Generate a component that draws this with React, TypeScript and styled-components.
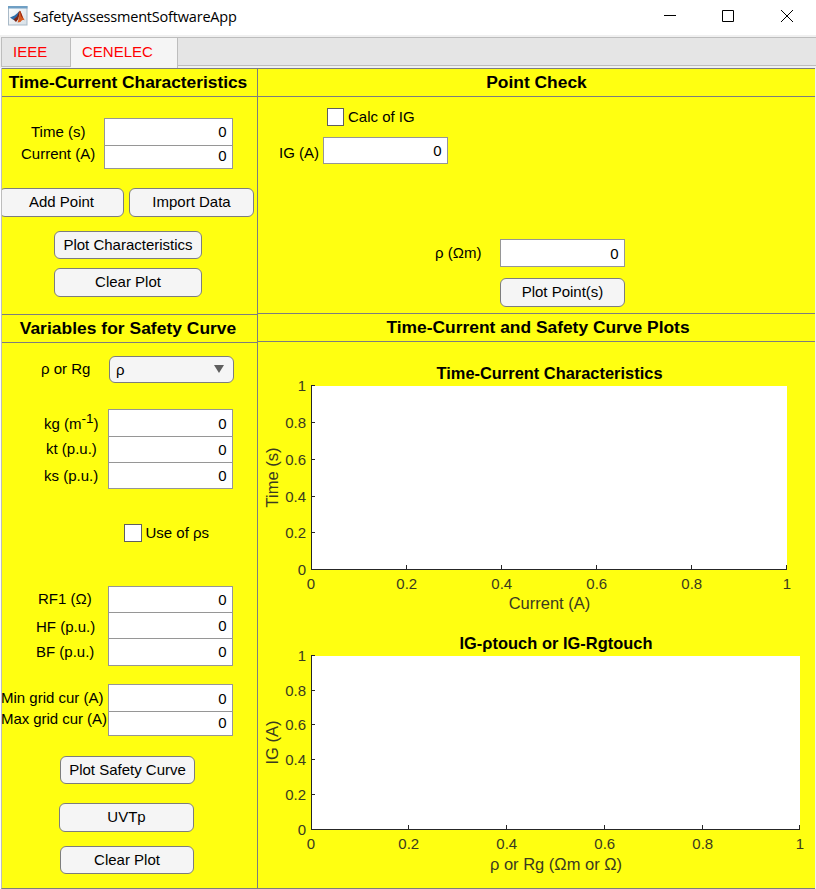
import React from "react";
import styled, { createGlobalStyle } from "styled-components";

const YELLOW = "#ffff11";
const LINE = "#7d7d7d";

const Global = createGlobalStyle`
  *, *::before, *::after { box-sizing: border-box; }
  html, body { margin: 0; padding: 0; background: #f0f0f0; overflow: hidden; }
  body, button, input { font-family: "Liberation Sans", Arial, sans-serif; font-size: 15px; color: #000; }
`;

const Window = styled.div`
  width: 816px;
  height: 889px;
  display: flex;
  flex-direction: column;
  background: #f0f0f0;
  overflow: hidden;
`;

const TitleBar = styled.header`
  height: 35px;
  flex: none;
  background: #fff;
  display: flex;
  align-items: flex-start;
  padding: 6px 23px 0 8px;
`;

const AppTitle = styled.span`
  margin: 0 auto 0 5px;
  padding-top: 1px;
  font: 14.5px/20px "Open Sans", "Noto Sans", sans-serif;
  letter-spacing: -0.2px;
  white-space: nowrap;
`;

const WindowButtons = styled.div`
  display: flex;
  gap: 46px;
  padding-top: 4px;
  svg { display: block; }
  svg:nth-child(-n + 2) { margin-left: -1px; margin-right: 1px; }
`;

const TabStrip = styled.nav`
  flex: none;
  height: 31px;
  margin-top: 2px;
  padding-left: 1px;
  display: flex;
  align-items: flex-start;
`;

const Tab = styled.div<{ $active?: boolean; $width: number }>`
  width: ${(p) => p.$width}px;
  height: ${(p) => (p.$active ? 31 : 30)}px;
  padding-left: 11px;
  border-top: 1px solid #bdbdbd;
  border-right: 1px solid #bdbdbd;
  border-bottom: ${(p) => (p.$active ? "none" : "1px solid #bdbdbd")};
  border-left: ${(p) => (p.$active ? "none" : "1px solid #bdbdbd")};
  background: ${(p) => (p.$active ? "#f5f5f5" : "#e5e5e5")};
  color: #f00;
  line-height: 28px;
`;

const TabFill = styled.div`
  flex: 1;
  height: 29px;
  background: #e5e5e5;
  border-top: 1px solid #bdbdbd;
  border-bottom: 1px solid #bdbdbd;
`;

const Board = styled.main`
  flex: 1;
  margin-right: 1px;
  border-left: 1px solid #fff;
  display: grid;
  grid-template-columns: 257px 557px;
`;

const Side = styled.div<{ $left?: boolean; $split: string }>`
  display: grid;
  grid-template-rows: ${(p) => p.$split};
  min-width: 0;
  background: ${YELLOW};
  border-bottom: 1px solid ${LINE};
  border-right: ${(p) => (p.$left ? `1px solid ${LINE}` : "none")};
  border-left: ${(p) => (p.$left ? "1px solid #bdbdbd" : "none")};
`;

const Panel = styled.section`
  min-width: 0;
  overflow: hidden;
  border-top: 1px solid ${LINE};
`;

const PanelTitle = styled.h2<{ $shift?: number; $spacing?: number }>`
  margin: 0;
  height: 28px;
  text-indent: ${(p) => p.$shift ?? 0}px;
  letter-spacing: ${(p) => p.$spacing ?? 0}px;
  border-bottom: 1px solid ${LINE};
  font-size: 17.4px;
  line-height: 26px;
  text-align: center;
  white-space: nowrap;
`;

const Row = styled.div<{ $top?: number; $left?: number; $gap?: number }>`
  display: flex;
  align-items: flex-start;
  gap: ${(p) => p.$gap ?? 0}px;
  margin-top: ${(p) => p.$top ?? 0}px;
  padding-left: ${(p) => p.$left ?? 0}px;
`;

const Labels = styled.div<{ $width: number }>`
  flex: none;
  width: ${(p) => p.$width}px;
`;

const Label = styled.label<{ $top: number; $left: number; $spacing?: number }>`
  display: block;
  width: max-content;
  height: 18px;
  margin: ${(p) => p.$top}px 0 0 ${(p) => p.$left}px;
  line-height: 18px;
  letter-spacing: ${(p) => p.$spacing ?? 0}px;
  white-space: nowrap;
  sup { font-size: 13.5px; line-height: 0; vertical-align: 6px; }
`;

const Fields = styled.div<{ $width: number }>`
  flex: none;
  width: ${(p) => p.$width}px;
`;

const Field = styled.input<{ $height: number; $lift?: number }>`
  display: block;
  width: 100%;
  height: ${(p) => p.$height}px;
  margin: 0;
  padding: 0 5.5px ${(p) => p.$lift ?? 0}px 5px;
  border: 1px solid #969696;
  border-radius: 0;
  background: #fff;
  text-align: right;
  outline: none;
  & + & { margin-top: -1px; }
`;

const Button = styled.button<{ $width: number; $height: number }>`
  flex: none;
  width: ${(p) => p.$width}px;
  height: ${(p) => p.$height}px;
  padding: 0 0 2px;
  border: 1px solid ${LINE};
  border-radius: 6px;
  background: #f5f5f5;
  white-space: nowrap;
`;

const AddPoint = styled(Button)`
  margin-left: -3px;
`;

const Dropdown = styled.button`
  width: 125px;
  height: 27px;
  padding: 0 9px 0 6px;
  border: 1px solid ${LINE};
  border-radius: 6px;
  background: #f5f5f5;
  display: flex;
  align-items: center;
  justify-content: space-between;
  svg { margin-bottom: 2px; }
`;

const Check = styled.span<{ $width: number }>`
  width: ${(p) => p.$width}px;
  height: 18px;
  border: 1px solid #5f5f5f;
  background: #fff;
`;

const ChartSvg = styled.svg`
  display: block;
  font-family: "Liberation Sans", Arial, sans-serif;
`;
const TickText = styled.text`
  font-size: 15px;
  fill: #3a3a20;
`;
const AxisText = styled.text`
  font-size: 16.5px;
  fill: #3a3a20;
`;
const ChartTitle = styled.text`
  font-size: 16.4px;
  font-weight: bold;
`;

type ChartProps = {
  title: string;
  xLabel: string;
  yLabel: string;
  height: number;
  top: number;
  xTicks: number[];
  yTicks: number[];
  titleWidth: number;
  xLabelDrop: number;
};

const TICKS = ["0", "0.2", "0.4", "0.6", "0.8", "1"];

function Chart({ title, xLabel, yLabel, height, top, xTicks, yTicks, titleWidth, xLabelDrop }: ChartProps) {
  const left = xTicks[0];
  const right = xTicks[5] + 1;
  const bottom = yTicks[0];
  const mid = (left + right) / 2;
  return (
    <ChartSvg width={557} height={height}>
      <rect x={left} y={top} width={right - left} height={bottom - top} fill="#fff" />
      <ChartTitle x={mid + 0.5} y={top - 7} textAnchor="middle" textLength={titleWidth}>{title}</ChartTitle>
      <g stroke="#262626" shapeRendering="crispEdges">
        <path d={`M${left + 0.5} ${yTicks[5]}V${bottom + 0.5}H${right}`} fill="none" />
        {xTicks.map((x) => <path key={x} d={`M${x + 0.5} ${bottom}v-4`} />)}
        {yTicks.map((y) => <path key={y} d={`M${left} ${y + 0.5}h4`} />)}
      </g>
      {xTicks.map((x, i) => (
        <TickText key={x} x={i ? x + 0.8 : x} y={bottom + 20} textAnchor="middle">{TICKS[i]}</TickText>
      ))}
      {yTicks.map((y, i) => (
        <TickText key={y} x={left - 5} y={y + 6} textAnchor="end">{TICKS[i]}</TickText>
      ))}
      <AxisText x={mid + 0.5} y={bottom + xLabelDrop} textAnchor="middle">{xLabel}</AxisText>
      <AxisText transform={`translate(20 ${(top + bottom) / 2}) rotate(-90)`} textAnchor="middle">
        {yLabel}
      </AxisText>
    </ChartSvg>
  );
}

function AppIcon() {
  return (
    <svg width="20" height="20" viewBox="0 0 20 20">
      <defs>
        <linearGradient id="face" x1="0" y1="0" x2="1" y2="1">
          <stop offset="0" stopColor="#fff" />
          <stop offset="1" stopColor="#d7dfe6" />
        </linearGradient>
      </defs>
      <rect x="0.5" y="0.5" width="18.5" height="18.5" fill="url(#face)" stroke="#a9bac8" />
      <path d="M0 0h19.500v2.500H0z" fill="#6f9fc4" />
      <path d="M2 11.500l4.500-2 3-2.500 2-2-2 6-4 3z" fill="#2d6ca8" />
      <path d="M5.500 13.500l3.500-3 2-5 1.300-.5-2 8-2.300 3z" fill="#7c2416" />
      <path d="M11.800 4.500c2 2 2.500 6.700 5.200 10-2-1-3-.5-4.500 1.500L9.500 16.500c1.500-3 1.500-8 2.300-12z" fill="#d95a1e" />
      <path d="M11.800 4.500c1.500 2 2.300 5.500 3.700 8.500l-2.500-3z" fill="#8e2415" />
    </svg>
  );
}

const App = () => (
  <Window>
    <Global />
    <TitleBar>
      <AppIcon />
      <AppTitle>SafetyAssessmentSoftwareApp</AppTitle>
      <WindowButtons>
        <svg width="12" height="12"><path d="M0 5.500h12" stroke="#000" /></svg>
        <svg width="12" height="12"><path d="M.5.500h11v11H.5z" fill="none" stroke="#000" /></svg>
        <svg width="12" height="12"><path d="M0 0l12 12M12 0L0 12" stroke="#000" /></svg>
      </WindowButtons>
    </TitleBar>

    <TabStrip>
      <Tab $width={70}>IEEE</Tab>
      <Tab $width={107} $active>CENELEC</Tab>
      <TabFill />
    </TabStrip>

    <Board>
      <Side $left $split="246px 1fr">
        <Panel>
          <PanelTitle $shift={-3} $spacing={-0.03}>Time-Current Characteristics</PanelTitle>
          <Row $top={21}>
            <Labels $width={102}>
              <Label $top={5} $left={29}>Time (s)</Label>
              <Label $top={4} $left={19}>Current (A)</Label>
            </Labels>
            <Fields $width={129}>
              <Field $height={28} $lift={1} defaultValue="0" />
              <Field $height={24} $lift={3} defaultValue="0" />
            </Fields>
          </Row>
          <Row $top={19} $gap={5}>
            <AddPoint $width={125} $height={29}>Add Point</AddPoint>
            <Button $width={125} $height={29}>Import Data</Button>
          </Row>
          <Row $top={14} $left={52}><Button $width={148} $height={28}>Plot Characteristics</Button></Row>
          <Row $top={9} $left={52}><Button $width={148} $height={29}>Clear Plot</Button></Row>
        </Panel>
        <Panel>
          <PanelTitle $shift={-3} $spacing={0.04}>Variables for Safety Curve</PanelTitle>
          <Row $top={13}>
            <Labels $width={107}><Label $top={4} $left={39}>ρ or Rg</Label></Labels>
            <Dropdown>
              <span>ρ</span>
              <svg width="10" height="8" viewBox="0 0 10 8"><path d="M0 0h10L5 8z" fill="#5f5f5f" /></svg>
            </Dropdown>
          </Row>
          <Row $top={26}>
            <Labels $width={106}>
              <Label $top={6} $left={42}>kg (m<sup>-1</sup>)</Label>
              <Label $top={7} $left={44}>kt (p.u.)</Label>
              <Label $top={9} $left={42}>ks (p.u.)</Label>
            </Labels>
            <Fields $width={125}>
              <Field $height={28} defaultValue="0" />
              <Field $height={27} defaultValue="0" />
              <Field $height={27} defaultValue="0" />
            </Fields>
          </Row>
          <Row $top={35} $left={122} $gap={3.5}>
            <Check $width={18} />
            <Label $top={0} $left={0}>Use of ρs</Label>
          </Row>
          <Row $top={44}>
            <Labels $width={106}>
              <Label $top={4} $left={36}>RF1 (Ω)</Label>
              <Label $top={10} $left={34}>HF (p.u.)</Label>
              <Label $top={7} $left={34}>BF (p.u.)</Label>
            </Labels>
            <Fields $width={125}>
              <Field $height={27} defaultValue="0" />
              <Field $height={27} defaultValue="0" />
              <Field $height={28} $lift={2} defaultValue="0" />
            </Fields>
          </Row>
          <Row $top={18}>
            <Labels $width={106}>
              <Label $top={5} $left={-1}>Min grid cur (A)</Label>
              <Label $top={3} $left={-1} $spacing={-0.05}>Max grid cur (A)</Label>
            </Labels>
            <Fields $width={125}>
              <Field $height={28} defaultValue="0" />
              <Field $height={25} $lift={3} defaultValue="0" />
            </Fields>
          </Row>
          <Row $top={20} $left={58}><Button $width={135} $height={28}>Plot Safety Curve</Button></Row>
          <Row $top={19} $left={57}><Button $width={135} $height={29}>UVTp</Button></Row>
          <Row $top={14} $left={58}><Button $width={134} $height={28}>Clear Plot</Button></Row>
        </Panel>
      </Side>

      <Side $split="245px 1fr">
        <Panel>
          <PanelTitle>Point Check</PanelTitle>
          <Row $top={11} $left={69} $gap={4}>
            <Check $width={17} />
            <Label $top={0} $left={0}>Calc of IG</Label>
          </Row>
          <Row $top={11}>
            <Labels $width={65}><Label $top={7} $left={21}>IG (A)</Label></Labels>
            <Fields $width={125}><Field $height={27} defaultValue="0" /></Fields>
          </Row>
          <Row $top={75}>
            <Labels $width={242}><Label $top={5} $left={177}>ρ (Ωm)</Label></Labels>
            <Fields $width={125}><Field $height={28} defaultValue="0" /></Fields>
          </Row>
          <Row $top={11} $left={242}><Button $width={125} $height={29}>Plot Point(s)</Button></Row>
        </Panel>
        <Panel>
          <PanelTitle $shift={3}>Time-Current and Safety Curve Plots</PanelTitle>
          <Chart
            title="Time-Current Characteristics"
            xLabel="Current (A)"
            yLabel="Time (s)"
            height={278}
            top={44}
            titleWidth={226}
            xLabelDrop={40}
            xTicks={[53, 148, 243, 338, 433, 528]}
            yTicks={[227, 190, 154, 117, 80, 43]}
          />
          <Chart
            title="IG-ρtouch or IG-Rgtouch"
            xLabel="ρ or Rg (Ωm or Ω)"
            yLabel="IG (A)"
            height={268}
            top={36}
            titleWidth={193}
            xLabelDrop={41}
            xTicks={[53, 150, 248, 346, 444, 541]}
            yTicks={[209, 174, 139, 104, 70, 35]}
          />
        </Panel>
      </Side>
    </Board>
  </Window>
);

export default App;
